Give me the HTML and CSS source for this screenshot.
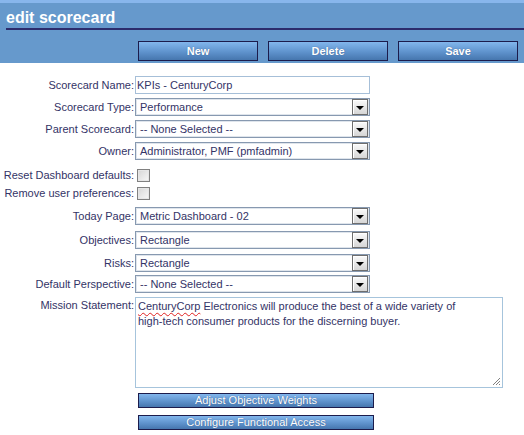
FILE: index.html
```html
<!DOCTYPE html>
<html>
<head>
<meta charset="utf-8">
<title>edit scorecard</title>
<link rel="stylesheet" href="styles.css">
</head>
<body>
<div class="header">
  <h1 class="title">edit scorecard</h1>
  <div class="toolbar">
    <button class="tbtn">New</button>
    <button class="tbtn">Delete</button>
    <button class="tbtn">Save</button>
  </div>
</div>
<div class="form">
  <div class="row">
    <span class="lbl">Scorecard Name:</span>
    <div class="text">KPIs - CenturyCorp</div>
  </div>
  <div class="row">
    <span class="lbl">Scorecard Type:</span>
    <div class="select"><span class="val">Performance</span><span class="arrow"></span></div>
  </div>
  <div class="row">
    <span class="lbl">Parent Scorecard:</span>
    <div class="select"><span class="val">-- None Selected --</span><span class="arrow"></span></div>
  </div>
  <div class="row">
    <span class="lbl">Owner:</span>
    <div class="select"><span class="val">Administrator, PMF (pmfadmin)</span><span class="arrow"></span></div>
  </div>
  <div class="row mt6">
    <span class="lbl">Reset Dashboard defaults:</span>
    <span class="check"></span>
  </div>
  <div class="row mt0">
    <span class="lbl">Remove user preferences:</span>
    <span class="check"></span>
  </div>
  <div class="row mt5">
    <span class="lbl">Today Page:</span>
    <div class="select"><span class="val">Metric Dashboard - 02</span><span class="arrow"></span></div>
  </div>
  <div class="row mt6">
    <span class="lbl">Objectives:</span>
    <div class="select"><span class="val">Rectangle</span><span class="arrow"></span></div>
  </div>
  <div class="row mt5">
    <span class="lbl">Risks:</span>
    <div class="select"><span class="val">Rectangle</span><span class="arrow"></span></div>
  </div>
  <div class="row mt3">
    <span class="lbl">Default Perspective:</span>
    <div class="select"><span class="val">-- None Selected --</span><span class="arrow"></span></div>
  </div>
  <div class="row row-tall">
    <span class="lbl lbl-top">Mission Statement:</span>
    <div class="textarea"><span class="spell">CenturyCorp</span> Electronics will produce the best of a wide variety of<br>high-tech consumer products for the discerning buyer.<svg class="grip" width="10" height="10" viewBox="0 0 10 10"><path d="M9 2 L2 9 M9 5 L5 9 M9 8 L8 9" stroke="#808080" stroke-width="1" fill="none"/></svg></div>
  </div>
  <div class="row row-btn mt5">
    <span class="lbl"></span>
    <button class="wbtn">Adjust Objective Weights</button>
  </div>
  <div class="row row-btn mt7">
    <span class="lbl"></span>
    <button class="wbtn">Configure Functional Access</button>
  </div>
</div>
</body>
</html>
```
FILE: styles.css
```css
html, body {
  margin: 0;
  padding: 0;
  background: #ffffff;
  font-family: "Liberation Sans", Arial, sans-serif;
  font-size: 11px;
  color: #333366;
}

.header {
  background: #6699cc;
  border-top: 3px solid #88b6ec;
  padding-bottom: 2px;
}

.title {
  margin: 0 0 0 6px;
  padding: 6px 0 1px 0;
  font-size: 16px;
  line-height: 18px;
  font-weight: bold;
  color: #ffffff;
  border-bottom: 2px solid #2c2c6c;
}

.toolbar {
  display: flex;
  justify-content: flex-end;
  gap: 10px;
  padding-right: 6px;
  margin-top: 11px;
}

.tbtn {
  width: 120px;
  height: 20px;
  margin: 0;
  padding: 0;
  border: 1px solid #1c1c4c;
  background: linear-gradient(#82b6ec, #5f93cd 55%, #4676ae);
  color: #ffffff;
  font-family: "Liberation Sans", Arial, sans-serif;
  font-size: 11px;
  font-weight: bold;
  text-shadow: 0 0 1px #3a5a8a;
}

.form {
  padding-top: 9px;
}

.row {
  display: flex;
  align-items: center;
  height: 18px;
  margin-top: 4px;
}

.mt0 { margin-top: 0; }
.mt3 { margin-top: 3px; }
.mt5 { margin-top: 5px; }
.mt6 { margin-top: 6px; }
.mt7 { margin-top: 7px; }

.lbl {
  flex: none;
  box-sizing: border-box;
  width: 135px;
  padding-right: 1px;
  text-align: right;
  line-height: 18px;
  white-space: nowrap;
}

.text {
  box-sizing: border-box;
  width: 235px;
  height: 18px;
  border: 1px solid #a6bfd8;
  padding-left: 1px;
  line-height: 16px;
  color: #333366;
}

.select {
  box-sizing: border-box;
  width: 235px;
  height: 18px;
  border: 1px solid #8799b0;
  box-shadow: inset 0 0 0 1px #dfe5ec;
  display: flex;
  align-items: center;
  justify-content: space-between;
  padding: 0 1px 0 4px;
}

.val {
  line-height: 16px;
}

.arrow {
  position: relative;
  box-sizing: border-box;
  width: 16px;
  height: 16px;
  border: 1px solid #6e6e6e;
  background: linear-gradient(#fafafa, #d6d6d6);
  box-shadow: inset 1px 1px 0 #ffffff;
}

.arrow::after {
  content: "";
  position: absolute;
  left: 3px;
  top: 6px;
  border-left: 4px solid transparent;
  border-right: 4px solid transparent;
  border-top: 4px solid #000000;
}

.check {
  box-sizing: border-box;
  width: 13px;
  height: 13px;
  margin-left: 2px;
  border: 1px solid #808080;
  background: linear-gradient(135deg, #d6d6d6, #f8f8f8);
  box-shadow: inset 0 0 0 1px #e6e6e6;
}

.row-tall {
  height: 91px;
  align-items: flex-start;
}

.lbl-top {
  padding-top: 1px;
  line-height: 15px;
}

.textarea {
  position: relative;
  box-sizing: border-box;
  width: 368px;
  height: 91px;
  border: 1px solid #a6c4dc;
  padding: 1px 2px;
  line-height: 15px;
  color: #333366;
}

.spell {
  text-decoration: underline wavy #e02020;
  text-decoration-thickness: 1px;
  text-underline-offset: 2px;
}

.grip {
  position: absolute;
  right: 1px;
  bottom: 1px;
}

.row-btn {
  height: 15px;
}

.wbtn {
  box-sizing: border-box;
  width: 236px;
  height: 15px;
  margin: 0 0 0 3px;
  padding: 0;
  border: 1px solid #1c1c4c;
  background: linear-gradient(#82b6ec, #5f93cd 55%, #4676ae);
  color: #ffffff;
  font-family: "Liberation Sans", Arial, sans-serif;
  font-size: 11px;
  line-height: 13px;
  text-shadow: 0 0 1px #3a5a8a;
}
```
